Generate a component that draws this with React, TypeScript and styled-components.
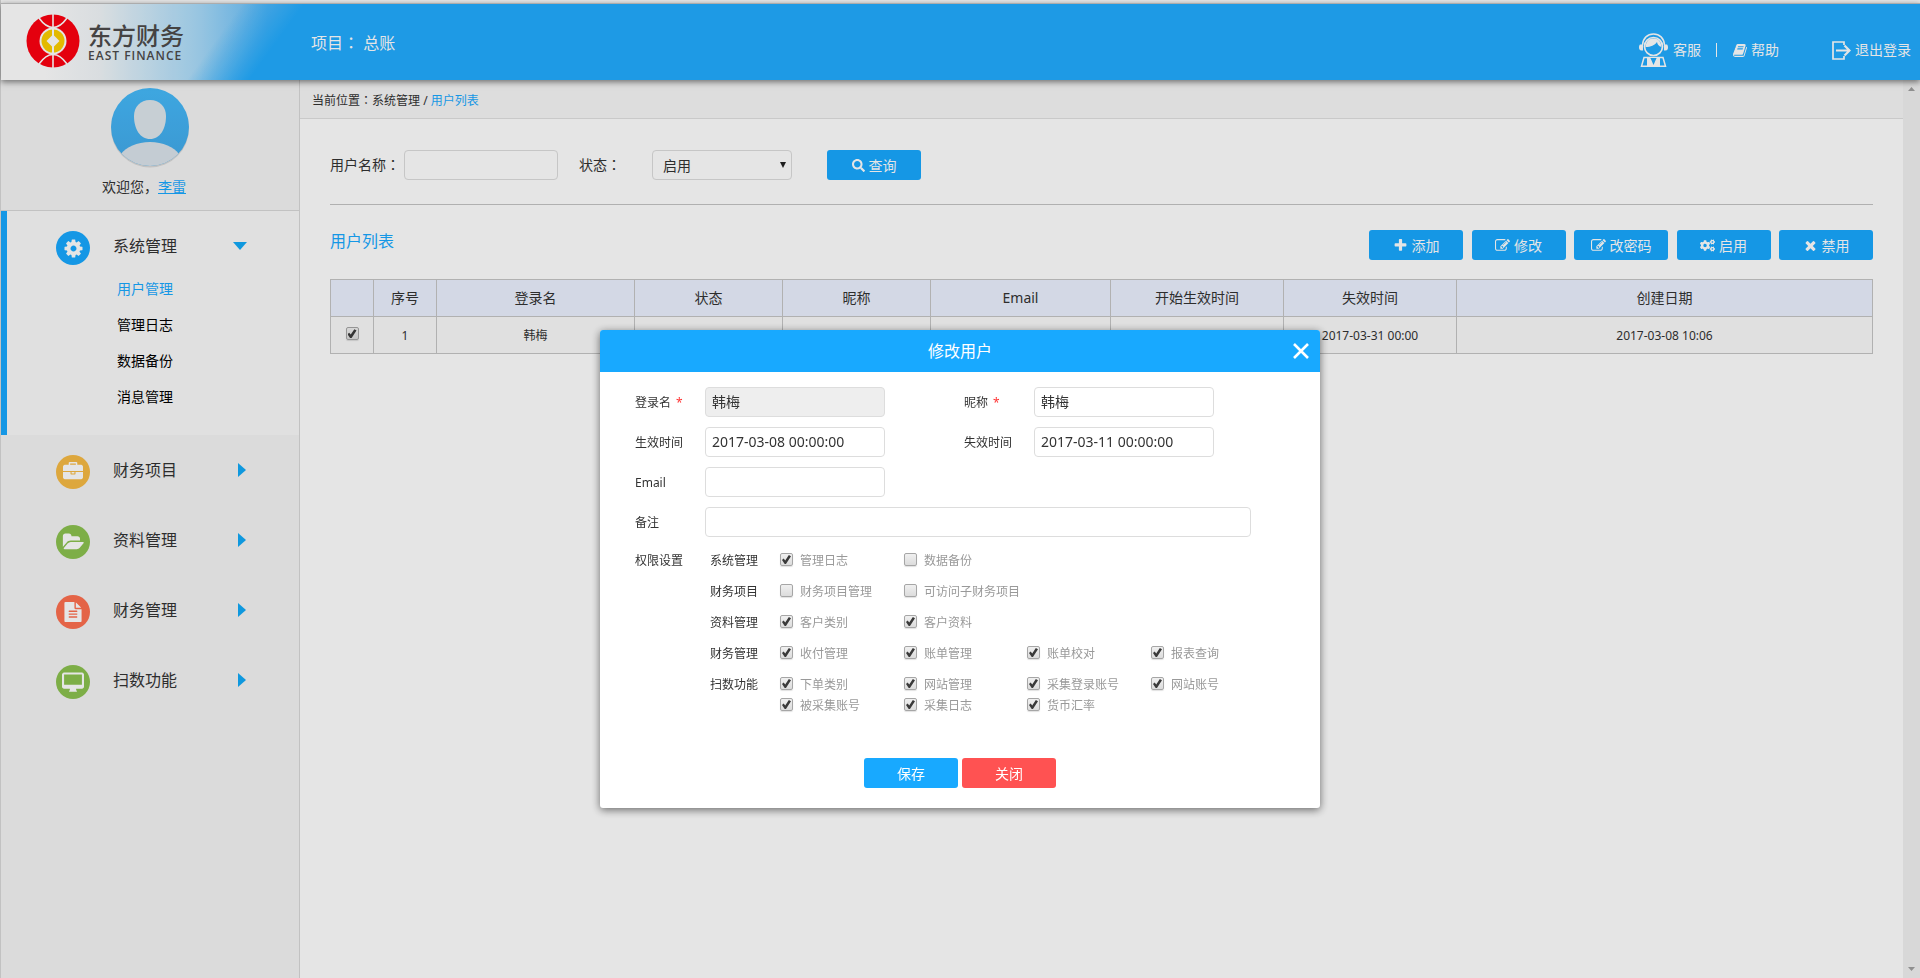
import React from 'react';
import styled, { createGlobalStyle } from 'styled-components';
import { FaCogs, FaSearch } from 'react-icons/fa';

const SANS = '"Noto Sans", "Noto Sans CJK SC", sans-serif';
const BLUE = '#18a9ff';

const GlobalStyle = createGlobalStyle`
  *, *::before, *::after { box-sizing: border-box; }
  body { margin: 0; background: #fff; color: #333; font: 14px/20px ${SANS}; }
  button, input, select { font-family: inherit; color: inherit; margin: 0; }
  button { cursor: pointer; }
  a { color: inherit; text-decoration: none; }
  h1, h2, p, ul, fieldset { margin: 0; padding: 0; font-weight: 400; border: 0; list-style: none; }
`;

const Page = styled.div`
  min-height: 100vh;
  display: flex;
  flex-direction: column;
  padding-top: 3px;
  border-left: 1px solid #d8d8d8;
`;

const Header = styled.header`
  position: relative;
  flex: none;
  display: flex;
  align-items: flex-start;
  height: 77px;
  border-top: 1px solid #c0c0c0;
  background: #22acff;
  color: #fff;
  box-shadow: 0 2px 6px rgba(0, 0, 0, 0.5);
`;

const Brand = styled.div`
  width: 310px;
  height: 76px;
  padding: 10px 0 0 25px;
  display: flex;
  gap: 8px;
  background:
    linear-gradient(126deg, rgba(34, 172, 255, 0) 66%, rgba(34, 172, 255, 0.5) 75%, #22acff 83%),
    linear-gradient(90deg, #fff 14%, #f2f7fa 32%, #a9dcfb 64%, #62bdfa 86%);
`;

const BrandText = styled.div`
  padding-top: 7px;
  color: #4d4b4b;
`;

const BrandName = styled.div`
  font: 500 24px/28px "Noto Sans CJK SC", sans-serif;
`;

const BrandLatin = styled.div`
  font: 600 12px/14px "Open Sans", sans-serif;
  letter-spacing: 1px;
  white-space: nowrap;
`;

const Project = styled.div`
  padding-top: 26px;
  font-size: 16px;
  line-height: 24px;
  white-space: pre;
`;

const HeaderLinks = styled.nav`
  margin: 26px 9px 0 auto;
  display: flex;
  align-items: center;
  height: 40px;
`;

const HeaderLink = styled.a<{ $gap: number }>`
  display: flex;
  align-items: center;
  gap: ${(p) => p.$gap}px;
`;

const Divider = styled.span`
  width: 1px;
  height: 14px;
  margin: 0 16px 0 15px;
  background: #fff;
`;

const Spacer = styled.span`
  width: 53px;
`;

const Body = styled.div`
  flex: 1;
  display: flex;
`;

const Sidebar = styled.aside`
  width: 299px;
  flex: none;
  background: #f4f4f4;
  border-right: 1px solid #d8d8d8;
`;

const Profile = styled.div`
  height: 131px;
  padding-top: 8px;
  display: flex;
  flex-direction: column;
  align-items: center;
  gap: 9px;
  border-bottom: 1px solid #d8d8d8;
`;

const Welcome = styled.p`
  padding-right: 12px;
`;

const UserLink = styled.a`
  color: ${BLUE};
  text-decoration: underline;
`;

const Group = styled.section<{ $open?: boolean }>`
  background: ${(p) => (p.$open ? '#fafafa' : 'transparent')};
  border-left: 6px solid ${(p) => (p.$open ? '#18a9ff' : 'transparent')};
  min-height: ${(p) => (p.$open ? 224 : 70)}px;
`;

const GroupHead = styled.button`
  width: 100%;
  height: 70px;
  padding: 4px 0 0 49px;
  display: flex;
  align-items: center;
  gap: 23px;
  background: none;
  border: 0;
  font-size: 16px;
  text-align: left;
`;

const GroupTitle = styled.span`
  width: 97px;
  padding-bottom: 6px;
`;

const Badge = styled.span<{ $color: string }>`
  width: 34px;
  height: 34px;
  border-radius: 50%;
  display: flex;
  align-items: center;
  justify-content: center;
  background: ${(p) => p.$color};
  color: #fff;
`;

const Arrow = styled.svg`
  margin-bottom: 4px;
`;

const SubList = styled.ul`
  margin-top: -10px;
  padding-left: 110px;
`;

const SubLink = styled.a<{ $active?: boolean }>`
  display: block;
  line-height: 36px;
  color: ${(p) => (p.$active ? BLUE : '#000')};
`;

const Main = styled.main`
  flex: 1;
  min-width: 0;
`;

const Crumbs = styled.nav`
  height: 39px;
  padding-left: 12px;
  background: #f6f6f6;
  border-bottom: 1px solid #e0e0e0;
  font-size: 12px;
  line-height: 40px;
`;

const Colon = styled.span`
  font-family: "Noto Sans CJK TC", sans-serif;
`;

const Accent = styled.a`
  color: ${BLUE};
`;

const Content = styled.div`
  padding: 31px 30px 0;
`;

const Filters = styled.form`
  display: flex;
  align-items: center;
  padding-bottom: 24px;
  border-bottom: 1px solid #c4c4c4;
`;

const FilterLabel = styled.label<{ $width: number }>`
  width: ${(p) => p.$width}px;
  padding-bottom: 2px;
`;

const TextInput = styled.input`
  width: 100%;
  height: 30px;
  padding: 0 6px 2px;
  border: 1px solid #ddd;
  border-radius: 4px;
  background: #fff;
  font-size: 14px;
  outline: 0;
  &:disabled { background: #eee; color: #333; }
`;

const NameBox = styled.div`
  width: 154px;
  margin-right: 21px;
`;

const SelectBox = styled.div`
  position: relative;
  width: 140px;
  margin-right: 35px;
`;

const Select = styled.select`
  appearance: none;
  width: 100%;
  height: 30px;
  padding: 0 10px;
  border: 1px solid #ddd;
  border-radius: 4px;
  background: #fff;
  font-size: 14px;
`;

const SelectMark = styled.svg`
  position: absolute;
  right: 6px;
  top: 12px;
  pointer-events: none;
`;

const Button = styled.button<{ $danger?: boolean }>`
  width: 94px;
  height: 30px;
  padding: 0;
  display: flex;
  align-items: center;
  justify-content: center;
  gap: 4px;
  border: 0;
  border-radius: 3px;
  background: ${(p) => (p.$danger ? '#ff5252' : BLUE)};
  color: #fff;
  font-size: 14px;
`;

const ListBar = styled.div`
  display: flex;
  justify-content: space-between;
  padding-top: 25px;
`;

const ListTitle = styled.h1`
  font-size: 16px;
  line-height: 22px;
  color: ${BLUE};
`;

const Actions = styled.div`
  width: 504px;
  display: flex;
  justify-content: space-between;
`;

const Table = styled.table`
  width: 100%;
  margin-top: 19px;
  table-layout: fixed;
  border-collapse: collapse;
  text-align: center;
  th, td { height: 37px; padding: 0; border: 1px solid #c6c6c6; font-weight: 400; white-space: nowrap; }
  th { background: #ebf1ff; font-size: 14px; }
  td { padding-top: 2px; background: #fafafa; font-size: 12px; }
`;

const Check = styled.input`
  appearance: none;
  width: 13px;
  height: 13px;
  flex: none;
  border: 1px solid #a6a6a6;
  border-radius: 2px;
  background: linear-gradient(#f0f0f0, #dcdcdc);
  box-shadow: 0 1px 1px rgba(0, 0, 0, 0.12);
  display: inline-grid;
  place-items: center;
  margin-bottom: 2px;
  &:checked::before {
    content: '';
    width: 9px;
    height: 9px;
    background: #3a3a3a;
    clip-path: polygon(0 56%, 18% 40%, 36% 60%, 76% 0, 100% 14%, 44% 100%, 30% 100%);
  }
`;

const TableCheck = styled(Check)`
  vertical-align: middle;
  margin-bottom: 6px;
`;

const ScrollTrack = styled.div`
  width: 17px;
  flex: none;
  padding: 7px 5px;
  display: flex;
  flex-direction: column;
  justify-content: space-between;
  background: #f1f1f1;
`;

const Overlay = styled.div`
  position: fixed;
  inset: 0;
  display: flex;
  justify-content: center;
  align-items: flex-start;
  padding-top: 330px;
  background: rgba(0, 0, 0, 0.1);
`;

const Dialog = styled.section`
  width: 720px;
  background: #fff;
  border-radius: 3px;
  box-shadow: 0 2px 8px rgba(0, 0, 0, 0.55);
`;

const DialogHead = styled.header`
  height: 42px;
  padding: 0 11px 0 27px;
  display: flex;
  align-items: center;
  border-radius: 3px 3px 0 0;
  background: ${BLUE};
  color: #fff;
`;

const DialogTitle = styled.h2`
  flex: 1;
  font-size: 16px;
  text-align: center;
`;

const Close = styled.button`
  display: flex;
  padding: 0;
  border: 0;
  background: none;
  color: #fff;
`;

const DialogForm = styled.form`
  padding: 15px 35px 20px;
`;

const Fields = styled.div`
  display: grid;
  grid-template-columns: 70px 180px 79px 70px 180px;
  row-gap: 10px;
  align-items: center;
`;

const FieldLabel = styled.label`
  grid-column: 1;
  padding-top: 2px;
  font-size: 12px;
`;

const SecondLabel = styled(FieldLabel)`
  grid-column: 4;
`;

const Star = styled.span`
  margin-left: 5px;
  color: #f33;
`;

const Wide = styled.div`
  grid-column: 2 / 6;
  width: 546px;
`;

const Permissions = styled.div`
  display: flex;
  margin-top: 13px;
  font-size: 12px;
`;

const PermLabel = styled.div`
  width: 75px;
  line-height: 21px;
`;

const PermRows = styled.div`
  display: flex;
  flex-direction: column;
  gap: 10px;
`;

const PermRow = styled.fieldset`
  display: flex;
`;

const PermName = styled.div`
  width: 70px;
  line-height: 21px;
`;

const PermGrid = styled.div`
  display: grid;
  grid-template-columns: 124px 123px 124px 110px;
`;

const PermItem = styled.label`
  display: flex;
  align-items: center;
  gap: 7px;
  height: 21px;
  white-space: nowrap;
  color: #999;
`;

const Footer = styled.div`
  display: flex;
  justify-content: center;
  gap: 4px;
  margin-top: 42px;
`;

const Glyph = ({ d, size, w = 1792 }: { d: string; size: number; w?: number }) => (
  <svg width={Math.round((size * w) / 1792)} height={size} viewBox={`0 0 ${w} 1792`} fill="currentColor" aria-hidden="true">
    <path d={d} />
  </svg>
);

const ICON = {
  book: 'M1639 478q40 57 18 129l-275 906q-19 64-76.500 107.500t-122.500 43.500h-923q-77 0-148.500-53.500t-99.500-131.500q-24-67-2-127 0-4 3-27t4-37q1-8-3-21.500t-3-19.500q2-11 8-21t16.500-23.500 16.500-23.500q23-38 45-91.500t30-91.500q3-10 .5-30t-.5-28q3-11 17-28t17-23q21-36 42-92t25-90q1-9-2.500-32t.5-28q4-13 22-30.500t22-22.500q19-26 42.500-84.500t27.500-96.500q1-8-3-25.500t-2-26.500q2-8 9-18t18-23 17-21q8-12 16.500-30.500t15-35 16-36 19.500-32 26.500-23.500 36-11.500 47.500 5.500l-1 3q38-9 51-9h761q74 0 114 56t18 130l-274 906q-36 119-71.500 153.500t-128.500 34.500h-869q-27 0-38 15-11 16-1 43 24 70 144 70h923q29 0 56-15.500t35-41.500l300-987q7-22 5-57 38 15 59 43zm-1064 2q-4 13 2 22.500t20 9.500h608q13 0 25.500-9.500t16.500-22.500l21-64q4-13-2-22.500t-20-9.500h-608q-13 0-25.500 9.500t-16.500 22.500zm-83 256q-4 13 2 22.500t20 9.500h608q13 0 25.500-9.500t16.500-22.500l21-64q4-13-2-22.500t-20-9.500h-608q-13 0-25.500 9.500t-16.500 22.500z',
  briefcase: 'M640 256h512v-128h-512v128zm1152 640v480q0 66-47 113t-113 47h-1472q-66 0-113-47t-47-113v-480h672v160q0 26 19 45t45 19h320q26 0 45-19t19-45v-160h672zm-768 0v128h-256v-128h256zm768-480v384h-1792v-384q0-66 47-113t113-47h352v-160q0-40 28-68t68-28h576q40 0 68 28t28 68v160h352q66 0 113 47t47 113z',
  folder: 'M1943 952q0 31-31 66l-336 396q-43 51-120.500 86.500t-143.500 35.500h-1088q-34 0-60.500-13t-26.500-43q0-31 31-66l336-396q43-51 120.500-86.500t143.500-35.500h1088q34 0 60.500 13t26.500 43zm-343-344v160h-832q-94 0-197 47.500t-164 119.500l-337 396-5 6q0-4-.5-12.500t-.5-12.500v-960q0-92 66-158t158-66h320q92 0 158 66t66 158v32h544q92 0 158 66t66 158z',
  file: 'M1596 476q14 14 28 36h-472v-472q22 14 36 28zm-476 164h544v1056q0 40-28 68t-68 28h-1344q-40 0-68-28t-28-68v-1600q0-40 28-68t68-28h800v544q0 40 28 68t68 28zm160 736v-64q0-14-9-23t-23-9h-704q-14 0-23 9t-9 23v64q0 14 9 23t23 9h704q14 0 23-9t9-23zm0-256v-64q0-14-9-23t-23-9h-704q-14 0-23 9t-9 23v64q0 14 9 23t23 9h704q14 0 23-9t9-23zm0-256v-64q0-14-9-23t-23-9h-704q-14 0-23 9t-9 23v64q0 14 9 23t23 9h704q14 0 23-9t9-23z',
  screen: 'M160 128h1472q60 0 110 50t50 110v992q0 60-50 110t-110 50h-480v130q40 20 60 60v70h-632v-70q20-40 60-60v-130h-480q-60 0-110-50t-50-110v-992q0-60 50-110t110-50zm10 150v840h1452v-840z',
  cog: 'M1152 896q0-106-75-181t-181-75-181 75-75 181 75 181 181 75 181-75 75-181zm512-109v222q0 12-8 23t-20 13l-185 28q-19 54-39 91 35 50 107 138 10 12 10 25t-9 23q-27 37-99 108t-94 71q-12 0-26-9l-138-108q-44 23-91 38-16 136-29 186-7 28-36 28h-222q-14 0-24.500-8.500t-11.500-21.500l-28-184q-49-16-90-37l-141 107q-10 9-25 9-14 0-25-11-126-114-165-168-7-10-7-23 0-12 8-23 15-21 51-66.500t54-70.500q-27-50-41-99l-183-27q-13-2-21-12.500t-8-23.500v-222q0-12 8-23t19-13l186-28q14-46 39-92-40-57-107-138-10-12-10-24 0-10 9-23 26-36 98.500-107.500t94.500-71.500q13 0 26 10l138 107q44-23 91-38 16-136 29-186 7-28 36-28h222q14 0 24.500 8.500t11.500 21.500l28 184q49 16 90 37l142-107q9-9 24-9 13 0 25 10 129 119 165 170 7 8 7 22 0 12-8 23-15 21-51 66.500t-54 70.500q26 50 41 98l183 28q13 2 21 12.500t8 23.500z',
  edit: 'M888 1184l116-116-152-152-116 116v56h96v96h56zm440-720q-16-16-33 1l-350 350q-17 17-1 33t33-1l350-350q17-17 1-33zm80 594v190q0 119-84.500 203.500t-203.500 84.500h-832q-119 0-203.500-84.500t-84.500-203.500v-832q0-119 84.500-203.500t203.500-84.500h832q63 0 117 25 15 7 18 23 3 17-9 29l-49 49q-14 14-32 8-23-6-45-6h-832q-66 0-113 47t-47 113v832q0 66 47 113t113 47h832q66 0 113-47t47-113v-126q0-13 9-22l64-64q15-15 35-7t20 29zm-96-738l288 288-672 672h-288v-288zm444 132l-92 92-288-288 92-92q28-28 68-28t68 28l152 152q28 28 28 68t-28 68z',
  plus: 'M1600 736v192q0 40-28 68t-68 28h-416v416q0 40-28 68t-68 28h-192q-40 0-68-28t-28-68v-416h-416q-40 0-68-28t-28-68v-192q0-40 28-68t68-28h416v-416q0-40 28-68t68-28h192q40 0 68 28t28 68v416h416q40 0 68 28t28 68z',
  times: 'M1490 1322q0 40-28 68l-136 136q-28 28-68 28t-68-28l-294-294-294 294q-28 28-68 28t-68-28l-136-136q-28-28-28-68t28-68l294-294-294-294q-28-28-28-68t28-68l136-136q28-28 68-28t68 28l294 294 294-294q28-28 68-28t68 28l136 136q28 28 28 68t-28 68l-294 294 294 294q28 28 28 68z',
};

const Logo = () => (
  <svg width="54" height="54" viewBox="0 0 54 54" aria-hidden="true">
    <circle cx="27" cy="27" r="26.500" fill="#fe0010" />
    <g fill="none" stroke="#fff" strokeWidth="1.600">
      <path d="M27 0v54" />
      <path d="M13 4c5 7 9 9.500 14 9.500s9-2.500 14-9.500" />
      <path d="M13 50c5-7 9-9.500 14-9.500s9 2.500 14 9.500" />
    </g>
    <circle cx="27" cy="27" r="13.500" fill="#fff" />
    <circle cx="27" cy="27" r="11.500" fill="#fdd000" />
    <path d="M27 14v26" stroke="#fff" strokeWidth="2" />
    <path d="M27 20.500l6.500 6.500-6.500 6.500-6.500-6.500z" fill="#fff" />
  </svg>
);

const Avatar = () => (
  <svg width="80" height="80" viewBox="0 0 80 80" aria-hidden="true">
    <defs>
      <linearGradient id="face" x1="0" y1="0" x2="0" y2="1">
        <stop offset="0" stopColor="#46bafa" />
        <stop offset="1" stopColor="#41a9ea" />
      </linearGradient>
      <clipPath id="disc"><circle cx="40" cy="39" r="39" /></clipPath>
    </defs>
    <circle cx="40" cy="40.500" r="39" fill="#d8d8d8" />
    <circle cx="40" cy="39" r="39" fill="url(#face)" />
    <path clipPath="url(#disc)" d="M11 66c5-7 16-12 29-12s24 5 29 12v14H11z" fill="#dbe4eb" />
    <path d="M40 12c10 0 16 7 16 16 0 13-6 23-16 23S24 41 24 28c0-9 6-16 16-16z" fill="#dee7ec" />
  </svg>
);

const ServiceIcon = () => (
  <svg width="29" height="34" viewBox="0 0 29 34" fill="none" stroke="#fff" aria-hidden="true">
    <path d="M3.500 12C4 5 8.500 1 14.500 1S25 5 25.500 12" strokeWidth="1.500" />
    <circle cx="14.500" cy="13.500" r="9" strokeWidth="1.700" />
    <path d="M6.500 14C7 8 10 5.500 14.500 5.500S22 8 22.500 14c-3-1-4-2.500-4.500-5-2.500 3.500-6 5-11.500 5z" fill="#fff" stroke="none" />
    <path d="M1 11.500h3v6H2.500C.5 17.500 0 16 0 14.500s.3-2.300 1-3zM28 11.500h-3v6h1.500c2 0 2.500-1.500 2.500-3s-.3-2.300-1-3z" fill="#fff" stroke="none" />
    <path d="M2.500 33.200L5 24.500h19l2.500 8.700z" strokeWidth="1.500" />
    <path d="M8 33V25h3.500l3 5 3-5H21v8z" fill="#fff" stroke="none" />
    <path d="M11.500 25l3 7 3-7z" fill="#22acff" stroke="none" />
  </svg>
);

const ExitIcon = () => (
  <svg width="19" height="19" viewBox="0 0 19 19" fill="none" stroke="#fff" strokeWidth="1.700" aria-hidden="true">
    <path d="M12 4V1H1v17h11v-3" />
    <path d="M4 9.500h13M12.500 4.500l5 5-5 5" strokeWidth="2.200" />
  </svg>
);

const groups = [
  { title: '财务项目', color: '#f7ba44', icon: <Glyph d={ICON.briefcase} size={20} /> },
  { title: '资料管理', color: '#8cc250', icon: <Glyph d={ICON.folder} size={20} w={1943} /> },
  { title: '财务管理', color: '#fe7050', icon: <Glyph d={ICON.file} size={20} /> },
  { title: '扫数功能', color: '#8cc250', icon: <Glyph d={ICON.screen} size={22} /> },
];

const permissions: { name: string; items: [string, boolean][] }[] = [
  { name: '系统管理', items: [['管理日志', true], ['数据备份', false]] },
  { name: '财务项目', items: [['财务项目管理', false], ['可访问子财务项目', false]] },
  { name: '资料管理', items: [['客户类别', true], ['客户资料', true]] },
  { name: '财务管理', items: [['收付管理', true], ['账单管理', true], ['账单校对', true], ['报表查询', true]] },
  {
    name: '扫数功能',
    items: [['下单类别', true], ['网站管理', true], ['采集登录账号', true], ['网站账号', true], ['被采集账号', true], ['采集日志', true], ['货币汇率', true]],
  },
];

const actions = [
  { label: '添加', icon: <Glyph d={ICON.plus} size={15} /> },
  { label: '修改', icon: <Glyph d={ICON.edit} size={15} /> },
  { label: '改密码', icon: <Glyph d={ICON.edit} size={15} /> },
  { label: '启用', icon: <FaCogs size={15} /> },
  { label: '禁用', icon: <Glyph d={ICON.times} size={15} /> },
];

const widths = [43, 63, 198, 148, 148, 180, 173, 173];
const heads = ['序号', '登录名', '状态', '昵称', 'Email', '开始生效时间', '失效时间', '创建日期'];
const row = ['1', '韩梅', '', '', '', '', '2017-03-31 00:00', '2017-03-08 10:06'];

export default function App() {
  return (
    <>
      <GlobalStyle />
      <Page>
        <Header>
          <Brand>
            <Logo />
            <BrandText>
              <BrandName>东方财务</BrandName>
              <BrandLatin>EAST FINANCE</BrandLatin>
            </BrandText>
          </Brand>
          <Project>项目<Colon>：</Colon> 总账</Project>
          <HeaderLinks>
            <HeaderLink href="#service" $gap={5}><ServiceIcon />客服</HeaderLink>
            <Divider />
            <HeaderLink href="#help" $gap={4}><Glyph d={ICON.book} size={15} w={1664} />帮助</HeaderLink>
            <Spacer />
            <HeaderLink href="#logout" $gap={4}><ExitIcon />退出登录</HeaderLink>
          </HeaderLinks>
        </Header>
        <Body>
          <Sidebar>
            <Profile>
              <Avatar />
              <Welcome>欢迎您，<UserLink href="#me">李雷</UserLink></Welcome>
            </Profile>
            <Group $open>
              <GroupHead type="button">
                <Badge $color={BLUE}><Glyph d={ICON.cog} size={21} /></Badge>
                <GroupTitle>系统管理</GroupTitle>
                <Arrow width="14" height="8" viewBox="0 0 14 8"><path d="M0 0h14L7 8z" fill="#11aaf8" /></Arrow>
              </GroupHead>
              <SubList>
                <li><SubLink href="#users" $active>用户管理</SubLink></li>
                <li><SubLink href="#logs">管理日志</SubLink></li>
                <li><SubLink href="#backup">数据备份</SubLink></li>
                <li><SubLink href="#messages">消息管理</SubLink></li>
              </SubList>
            </Group>
            {groups.map((g) => (
              <Group key={g.title}>
                <GroupHead type="button">
                  <Badge $color={g.color}>{g.icon}</Badge>
                  <GroupTitle>{g.title}</GroupTitle>
                  <Arrow width="16" height="14" viewBox="0 0 16 14"><path d="M5 0v14l8-7z" fill="#11aaf8" /></Arrow>
                </GroupHead>
              </Group>
            ))}
          </Sidebar>
          <Main>
            <Crumbs>当前位置<Colon>：</Colon>系统管理 / <Accent href="#users">用户列表</Accent></Crumbs>
            <Content>
              <Filters>
                <FilterLabel htmlFor="q-name" $width={74}>用户名称<Colon>：</Colon></FilterLabel>
                <NameBox><TextInput id="q-name" /></NameBox>
                <FilterLabel htmlFor="q-state" $width={73}>状态<Colon>：</Colon></FilterLabel>
                <SelectBox>
                  <Select id="q-state" defaultValue="启用"><option>启用</option><option>禁用</option></Select>
                  <SelectMark width="6" height="6" viewBox="0 0 7 7"><path d="M0 0h7L3.500 7z" fill="#222" /></SelectMark>
                </SelectBox>
                <Button type="button"><FaSearch size={13} />查询</Button>
              </Filters>
              <ListBar>
                <ListTitle>用户列表</ListTitle>
                <Actions>
                  {actions.map((a) => <Button key={a.label} type="button">{a.icon}{a.label}</Button>)}
                </Actions>
              </ListBar>
              <Table>
                <colgroup>{widths.map((w, i) => <col key={i} width={w} />)}<col /></colgroup>
                <thead>
                  <tr><th aria-label="选择" />{heads.map((h) => <th key={h}>{h}</th>)}</tr>
                </thead>
                <tbody>
                  <tr>
                    <td><TableCheck type="checkbox" defaultChecked aria-label="韩梅" /></td>
                    {row.map((c, i) => <td key={i}>{c}</td>)}
                  </tr>
                </tbody>
              </Table>
            </Content>
          </Main>
          <ScrollTrack aria-hidden="true">
            <svg width="7" height="4" viewBox="0 0 7 4"><path d="M0 4h7L3.500 0z" fill="#a0a0a0" /></svg>
            <svg width="7" height="4" viewBox="0 0 7 4"><path d="M0 0h7L3.500 4z" fill="#a0a0a0" /></svg>
          </ScrollTrack>
        </Body>
      </Page>
      <Overlay>
        <Dialog role="dialog" aria-labelledby="dialog-title">
          <DialogHead>
            <DialogTitle id="dialog-title">修改用户</DialogTitle>
            <Close type="button" aria-label="关闭">
              <svg width="16" height="16" viewBox="0 0 16 16"><path d="M1 1l14 14M15 1L1 15" stroke="#fff" strokeWidth="2.600" /></svg>
            </Close>
          </DialogHead>
          <DialogForm>
            <Fields>
              <FieldLabel htmlFor="login">登录名<Star>*</Star></FieldLabel>
              <TextInput id="login" defaultValue="韩梅" disabled />
              <SecondLabel htmlFor="nick">昵称<Star>*</Star></SecondLabel>
              <TextInput id="nick" defaultValue="韩梅" />
              <FieldLabel htmlFor="from">生效时间</FieldLabel>
              <TextInput id="from" defaultValue="2017-03-08 00:00:00" />
              <SecondLabel htmlFor="to">失效时间</SecondLabel>
              <TextInput id="to" defaultValue="2017-03-11 00:00:00" />
              <FieldLabel htmlFor="email">Email</FieldLabel>
              <TextInput id="email" />
              <FieldLabel htmlFor="memo">备注</FieldLabel>
              <Wide><TextInput id="memo" /></Wide>
            </Fields>
            <Permissions>
              <PermLabel>权限设置</PermLabel>
              <PermRows>
                {permissions.map((p) => (
                  <PermRow key={p.name}>
                    <PermName>{p.name}</PermName>
                    <PermGrid>
                      {p.items.map(([label, on]) => (
                        <PermItem key={label}><Check type="checkbox" defaultChecked={on} />{label}</PermItem>
                      ))}
                    </PermGrid>
                  </PermRow>
                ))}
              </PermRows>
            </Permissions>
            <Footer>
              <Button type="button">保存</Button>
              <Button type="button" $danger>关闭</Button>
            </Footer>
          </DialogForm>
        </Dialog>
      </Overlay>
    </>
  );
}
